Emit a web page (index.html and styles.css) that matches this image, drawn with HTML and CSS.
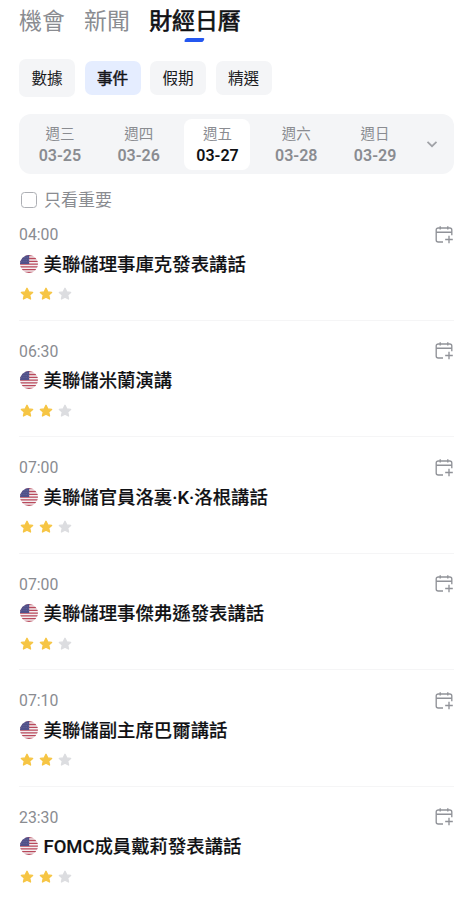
FILE: index.html
```html
<!DOCTYPE html>
<html lang="zh-Hant">
<head>
<meta charset="utf-8">
<meta name="viewport" content="width=device-width, initial-scale=1">
<title>財經日曆</title>
<link rel="stylesheet" href="styles.css">
</head>
<body>
<svg class="defs" aria-hidden="true">
  <defs>
    <clipPath id="disc"><circle cx="9" cy="9" r="9"/></clipPath>
    <symbol id="flag" viewBox="0 0 18 18">
      <g clip-path="url(#disc)">
        <rect width="18" height="18" fill="#f3eef1"/>
        <path d="M0 .7h18M0 3.5h18M0 6.3h18M0 9.1h18M0 11.9h18M0 14.7h18M0 17.5h18" stroke="#b9485a" stroke-width="1.3"/>
        <rect width="9.2" height="9" fill="#50508a"/>
        <path d="M2 2.5h7M1 4.5h8M1 6.5h8" stroke="#77779f" stroke-width=".6" stroke-dasharray=".7 1.1"/>
      </g>
    </symbol>
    <symbol id="star" viewBox="0 0 14 14">
      <path d="M7 1.3l1.7 3.6 3.9.5-2.9 2.7.8 3.9L7 10.1 3.500 12l.8-3.900L1.400 5.400l3.900-.5z" fill="currentColor" stroke="currentColor" stroke-width="1.400" stroke-linejoin="round"/>
    </symbol>
    <symbol id="calendar" viewBox="0 0 20 20">
      <path d="M9 17H4.200a2 2 0 0 1-2-2V5a2 2 0 0 1 2-2h11.600a2 2 0 0 1 2 2v5.200M2.200 7.200h15.600M6.200 1.200v3.400M13.800 1.200v3.400M15 10.700v7.600M11.200 14.500h7.600" fill="none" stroke="currentColor" stroke-width="1.350"/>
    </symbol>
  </defs>
</svg>
<main class="page">
  <nav class="tabs">
    <a class="tab">機會</a>
    <a class="tab">新聞</a>
    <a class="tab tab-active">財經日曆</a>
  </nav>
  <div class="chips">
    <button class="chip chip-large">數據</button>
    <button class="chip chip-active">事件</button>
    <button class="chip">假期</button>
    <button class="chip">精選</button>
  </div>
  <div class="dates">
    <div class="day"><span>週三</span><b>03-25</b></div>
    <div class="day"><span>週四</span><b>03-26</b></div>
    <div class="day day-active"><span>週五</span><b>03-27</b></div>
    <div class="day"><span>週六</span><b>03-28</b></div>
    <div class="day"><span>週日</span><b>03-29</b></div>
    <svg class="chevron" viewBox="0 0 12 12"><path d="M1.500 3.800L6 8.200l4.500-4.400" fill="none" stroke="currentColor" stroke-width="1.700"/></svg>
  </div>
  <label class="filter"><span class="box"></span>只看重要</label>
  <section class="events">
    <article class="event">
      <div class="meta"><time>04:00</time><svg class="add"><use href="#calendar"/></svg></div>
      <h2 class="title"><svg class="flag"><use href="#flag"/></svg>美聯儲理事庫克發表講話</h2>
      <div class="stars"><svg><use href="#star"/></svg><svg><use href="#star"/></svg><svg class="off"><use href="#star"/></svg></div>
    </article>
    <article class="event">
      <div class="meta"><time>06:30</time><svg class="add"><use href="#calendar"/></svg></div>
      <h2 class="title"><svg class="flag"><use href="#flag"/></svg>美聯儲米蘭演講</h2>
      <div class="stars"><svg><use href="#star"/></svg><svg><use href="#star"/></svg><svg class="off"><use href="#star"/></svg></div>
    </article>
    <article class="event">
      <div class="meta"><time>07:00</time><svg class="add"><use href="#calendar"/></svg></div>
      <h2 class="title"><svg class="flag"><use href="#flag"/></svg>美聯儲官員洛裏·K·洛根講話</h2>
      <div class="stars"><svg><use href="#star"/></svg><svg><use href="#star"/></svg><svg class="off"><use href="#star"/></svg></div>
    </article>
    <article class="event">
      <div class="meta"><time>07:00</time><svg class="add"><use href="#calendar"/></svg></div>
      <h2 class="title"><svg class="flag"><use href="#flag"/></svg>美聯儲理事傑弗遜發表講話</h2>
      <div class="stars"><svg><use href="#star"/></svg><svg><use href="#star"/></svg><svg class="off"><use href="#star"/></svg></div>
    </article>
    <article class="event">
      <div class="meta"><time>07:10</time><svg class="add"><use href="#calendar"/></svg></div>
      <h2 class="title"><svg class="flag"><use href="#flag"/></svg>美聯儲副主席巴爾講話</h2>
      <div class="stars"><svg><use href="#star"/></svg><svg><use href="#star"/></svg><svg class="off"><use href="#star"/></svg></div>
    </article>
    <article class="event">
      <div class="meta"><time>23:30</time><svg class="add"><use href="#calendar"/></svg></div>
      <h2 class="title"><svg class="flag"><use href="#flag"/></svg>FOMC成員戴莉發表講話</h2>
      <div class="stars"><svg><use href="#star"/></svg><svg><use href="#star"/></svg><svg class="off"><use href="#star"/></svg></div>
    </article>
  </section>
</main>
</body>
</html>
```
FILE: styles.css
```css
* { box-sizing: border-box; }
body {
  margin: 0;
  height: 900px;
  overflow: hidden;
  background: #fff;
  color: #101114;
  font-family: Roboto, "Noto Sans CJK SC", sans-serif;
}
.defs { position: absolute; width: 0; height: 0; }
.page { padding: 0 19px; }
.tabs {
  display: flex;
  gap: 19.300px;
  height: 43px;
  font-size: 22.900px;
  line-height: 44px;
  color: #8a8c91;
}
.tab { position: relative; white-space: nowrap; }
.tab-active { color: #101114; -webkit-text-stroke: .65px #101114; }
.tab-active::after {
  content: "";
  position: absolute;
  left: 50%;
  top: 38px;
  width: 19px;
  height: 3.500px;
  margin-left: -10px;
  border-radius: 1.500px;
  background: #2457f0;
  transform: skewX(-25deg);
}
.chips { display: flex; align-items: center; gap: 9.500px; height: 70px; }
.chip {
  width: 56px;
  height: 34px;
  padding: 2px 0 0;
  border: 0;
  border-radius: 7px;
  background: #f4f5f7;
  color: #18191c;
  font: 15.600px/32px Roboto, "Noto Sans CJK SC", sans-serif;
}
.chip-large { height: 38px; }
.chip-active { background: #e5edff; -webkit-text-stroke: .5px #101114; }
.dates {
  display: flex;
  align-items: center;
  gap: 12.800px;
  width: 435px;
  height: 60px;
  margin-top: 1px;
  padding-left: 7.900px;
  border-radius: 12px;
  background: #f4f5f7;
  color: #8a8c91;
}
.day {
  flex: 0 0 66px;
  height: 51px;
  padding-top: 5px;
  border-radius: 8px;
  text-align: center;
  font-size: 14.500px;
  line-height: 21px;
}
.day span, .day b { display: block; }
.day b { font-size: 16px; font-weight: 600; }
.day-active { background: #fff; }
.day-active b { color: #101114; }
.chevron { width: 12px; height: 12px; margin-left: 5px; color: #a0a2a7; }
.filter {
  display: flex;
  align-items: center;
  gap: 7px;
  height: 24px;
  margin-top: 14px;
  padding-left: 2px;
  font-size: 17px;
  line-height: 24px;
  color: #8a8c91;
}
.box { width: 16px; height: 16px; margin-top: -1px; border: 1px solid #adafb4; border-radius: 3.500px; }
.event {
  width: 435px;
  height: 116.600px;
  padding-top: 20px;
  border-bottom: 1px solid #f5f5f6;
}
.event:first-child { height: 108.600px; padding-top: 12px; }
.event:last-child { border-bottom: 0; }
.meta {
  display: flex;
  align-items: center;
  justify-content: space-between;
  height: 22px;
  font-size: 15.800px;
  line-height: 22px;
  color: #8a8c91;
}
.add { width: 20px; height: 20px; margin-top: -1px; color: #909298; }
.title {
  display: flex;
  align-items: center;
  height: 36px;
  margin: 0;
  font-size: 18.400px;
  font-weight: 500;
  line-height: 37px;
  white-space: nowrap;
  -webkit-text-stroke: .15px #101114;
}
.flag { width: 18px; height: 18px; margin: -1px 5.500px 0 1px; }
.stars { display: flex; align-items: center; gap: 5.200px; height: 24px; padding-left: .5px; color: #f6c544; }
.stars svg { width: 14px; height: 14px; }
.stars .off { color: #dcdde0; }
```
